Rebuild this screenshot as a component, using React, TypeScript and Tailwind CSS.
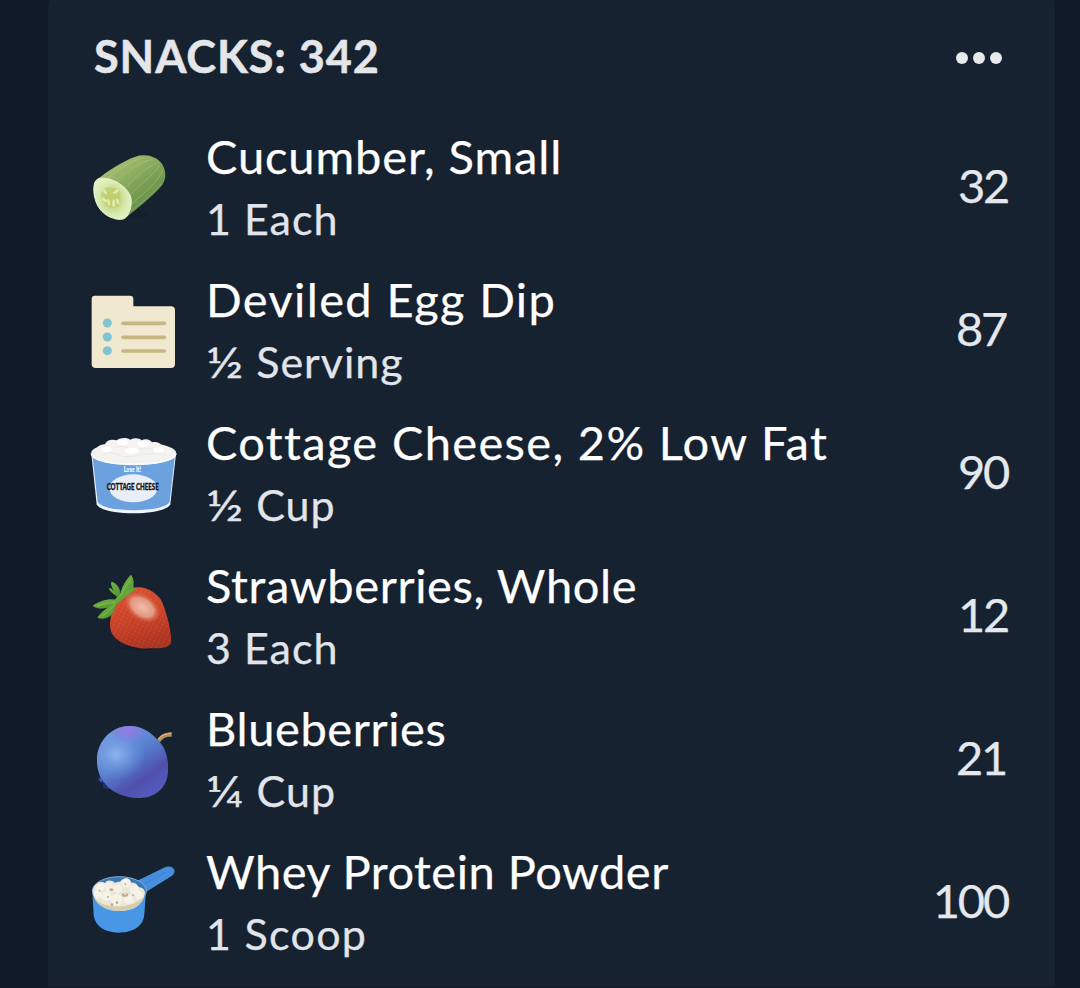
const CucumberIcon = () => (
  <svg viewBox="0 -9 330 303" className="w-[110px] h-[101px] shrink-0">
    <defs>
      <linearGradient id="cucumberSkin" x1="0.2" y1="0.1" x2="0.75" y2="0.8">
        <stop offset="0" stopColor="#a9c27a" />
        <stop offset="0.35" stopColor="#90b062" />
        <stop offset="0.6" stopColor="#7ca154" />
        <stop offset="1" stopColor="#658f4a" />
      </linearGradient>
      <radialGradient id="cucumberFlesh">
        <stop offset="0" stopColor="#c3d376" />
        <stop offset="0.45" stopColor="#c9da8b" />
        <stop offset="0.75" stopColor="#d8eab0" />
        <stop offset="1" stopColor="#e0f1c0" />
      </radialGradient>
    </defs>
    <ellipse cx="160" cy="222" rx="48" ry="13" fill="#101a26" opacity="0.35" />
    <path d="M50 119 C80 95 130 62 166 50 C197 40 232 49 248 75 C260 96 258 120 245 137 C217 168 178 202 128 239Z" fill="url(#cucumberSkin)" />
    <g fill="none" stroke="#c1d58e" strokeWidth="2.5" opacity="0.45" strokeLinecap="round">
      <path d="M86 112 C120 85 158 60 190 53" />
      <path d="M112 118 C150 88 190 58 218 60" strokeDasharray="12 4" />
      <path d="M139 140 C170 108 205 76 235 69" />
      <path d="M150 165 C185 128 221 104 239 77" strokeDasharray="18 3" />
      <path d="M155 192 C190 160 228 135 248 91" />
      <path d="M154 212 C190 184 222 158 247 128" strokeDasharray="9 5" />
    </g>
    <path d="M43 132 C47 114 65 111 87 117 C116 125 143 146 152 170 C157 190 151 217 139 231 C130 240 113 240 98 234 C75 227 54 208 46 179 C41 163 40 144 43 132Z" fill="url(#cucumberFlesh)" stroke="#e7f4ce" strokeWidth="3" />
    <path d="M65 157 C70 140 88 137 99 145 C116 141 125 156 119 172 C124 188 118 204 105 202 C90 208 73 196 70 180 C62 175 61 166 65 157Z" fill="#bccb62" opacity="0.55" />
    <g fill="#e4ecb3">
      <ellipse cx="75" cy="155" rx="4" ry="9" transform="rotate(-35 75 155)" />
      <ellipse cx="108" cy="155" rx="4" ry="10" transform="rotate(55 108 155)" />
      <ellipse cx="73" cy="179" rx="4" ry="10" transform="rotate(-48 73 179)" />
      <ellipse cx="86" cy="187" rx="4" ry="10" transform="rotate(-10 86 187)" />
      <ellipse cx="101" cy="190" rx="4" ry="12" />
      <ellipse cx="113" cy="184" rx="4" ry="10" transform="rotate(-20 113 184)" />
    </g>
  </svg>
);

const RecipeIcon = () => (
  <svg viewBox="0 0 330 303" className="w-[110px] h-[101px] shrink-0">
    <path d="M45 47 H150 Q160 47 160 57 V79 H273 Q285 79 285 91 V252 Q285 264 273 264 H47 Q35 264 35 252 V57 Q35 47 45 47Z" fill="#f1e9cf" />
    {[129, 171, 212].map((y) => (
      <g key={y}>
        <circle cx="82" cy={y} r="13.5" fill="#7fc3d4" />
        <path d={`M129 ${y + 1} H253`} stroke="#c6b67f" strokeWidth="11" strokeLinecap="round" />
      </g>
    ))}
  </svg>
);

const CottageCheeseIcon = () => (
  <svg viewBox="0 -6 330 303" className="w-[110px] h-[101px] shrink-0">
    <path d="M34 86 L50 238 C65 274 255 274 271 238 L288 86Z" fill="#eef5fd" />
    <path d="M38 98 C90 127 232 127 284 98 L269 230 C255 264 67 264 53 230Z" fill="#6ba1df" />
    <ellipse cx="161" cy="83" rx="127" ry="33" fill="#f1f1ef" />
    <path d="M49 86 C44 67 57 59 75 58 C81 42 101 43 110 46 C122 37 142 38 151 44 C163 38 179 39 184 46 C199 39 212 45 216 52 C233 49 244 57 247 66 C269 64 282 74 277 87 C240 112 86 113 49 86Z" fill="#f4f3f0" />
    <g fill="#fff">
      <ellipse cx="80" cy="73" rx="15" ry="9" />
      <ellipse cx="127" cy="53" rx="17" ry="9" />
      <ellipse cx="190" cy="57" rx="18" ry="10" />
      <ellipse cx="235" cy="75" rx="17" ry="8" />
      <ellipse cx="156" cy="77" rx="22" ry="9" />
    </g>
    <path d="M65 91 Q88 77 109 88 T155 94 T207 86 T257 91 M106 67 Q128 59 145 69 M178 73 Q198 65 219 73" fill="none" stroke="#ddd9d1" strokeWidth="3" opacity="0.5" />
    <path d="M34 85 C42 129 280 129 288 85" fill="none" stroke="#f8fafc" strokeWidth="6" />
    <ellipse cx="160" cy="190" rx="72" ry="42" fill="#e9eef9" />
    <text x="157" y="142" fill="#fff" fontFamily="Lato, sans-serif" fontWeight="900" fontSize="20" textAnchor="middle" textLength="52" lengthAdjust="spacingAndGlyphs">Lose It!</text>
    <text x="158" y="194" fill="#14151c" stroke="#14151c" strokeWidth="1" fontFamily="Lato, sans-serif" fontWeight="900" fontSize="27" textAnchor="middle" textLength="156" lengthAdjust="spacingAndGlyphs">COTTAGE CHEESE</text>
  </svg>
);

const StrawberryIcon = () => (
  <svg viewBox="0 3 330 303" className="w-[110px] h-[101px] shrink-0">
    <defs>
      <linearGradient id="berryBody" x1="0.3" y1="0" x2="0.55" y2="1">
        <stop offset="0" stopColor="#db5236" />
        <stop offset="0.5" stopColor="#cb4429" />
        <stop offset="1" stopColor="#ab3421" />
      </linearGradient>
      <radialGradient id="berryShine">
        <stop offset="0" stopColor="#f0bcab" />
        <stop offset="0.6" stopColor="#e8a692" stopOpacity="0.85" />
        <stop offset="1" stopColor="#d8583b" stopOpacity="0" />
      </radialGradient>
      <pattern id="berrySeeds" width="13" height="11" patternUnits="userSpaceOnUse" patternTransform="rotate(27)">
        <circle cx="3" cy="3" r="1.8" fill="#ee8a59" />
        <circle cx="9" cy="8" r="1.8" fill="#982b1b" />
      </pattern>
      <linearGradient id="berryLeaf" x1="0" y1="0" x2="1" y2="1">
        <stop offset="0" stopColor="#78bc49" />
        <stop offset="1" stopColor="#4c8e2c" />
      </linearGradient>
    </defs>
    <ellipse cx="178" cy="247" rx="70" ry="9" fill="#0f1722" opacity="0.4" />
    <path d="M166 68 C192 61 229 81 243 105 C258 135 277 205 273 232 C271 246 247 251 217 250 C174 253 132 241 109 221 C91 207 87 185 92 160 C96 123 128 77 166 68Z" fill="url(#berryBody)" />
    <path d="M166 68 C192 61 229 81 243 105 C258 135 277 205 273 232 C271 246 247 251 217 250 C174 253 132 241 109 221 C91 207 87 185 92 160 C96 123 128 77 166 68Z" fill="url(#berrySeeds)" opacity="0.4" />
    <ellipse cx="187" cy="127" rx="62" ry="40" transform="rotate(34 187 127)" fill="url(#berryShine)" />
    <g fill="url(#berryLeaf)">
      <path d="M118 101 C121 71 137 44 153 29 C162 40 162 57 160 68 C169 66 172 73 163 76 C147 86 132 91 118 101Z" />
      <path d="M114 98 C105 89 91 83 86 70 C95 68 98 76 103 79 C94 64 91 55 95 50 C112 55 124 73 120 91Z" />
      <path d="M111 105 C89 99 60 107 38 122 C51 135 85 132 105 119Z" />
      <path d="M110 113 C85 124 66 138 52 158 C70 166 91 157 98 145 C104 137 105 124 110 113Z" />
      <path d="M97 115 C111 90 138 76 168 69 C154 87 129 98 107 121Z" />
    </g>
    <path d="M119 94 Q137 67 151 43 M106 112 Q79 115 51 122 M105 117 Q87 143 66 153" fill="none" stroke="#91ce5b" strokeWidth="3" opacity="0.6" />
  </svg>
);

const BlueberryIcon = () => (
  <svg viewBox="0 -3 330 303" className="w-[110px] h-[101px] shrink-0">
    <defs>
      <linearGradient id="blueberrySkin" x1="0.2" y1="0.15" x2="0.7" y2="0.9">
        <stop offset="0" stopColor="#6f96df" />
        <stop offset="0.45" stopColor="#577fce" />
        <stop offset="0.8" stopColor="#504fac" />
        <stop offset="1" stopColor="#5259ba" />
      </linearGradient>
      <radialGradient id="blueberryShine">
        <stop offset="0" stopColor="#8cb5ee" />
        <stop offset="1" stopColor="#6794de" stopOpacity="0" />
      </radialGradient>
      <radialGradient id="blueberryViolet">
        <stop offset="0" stopColor="#9d77e5" />
        <stop offset="1" stopColor="#8576dd" stopOpacity="0" />
      </radialGradient>
      <clipPath id="blueberryShape">
        <path d="M145 48 C185 46 215 68 237 94 C258 116 267 151 264 185 C262 231 230 259 188 263 C143 267 101 252 76 222 C59 203 50 177 51 150 C51 94 93 50 145 48Z" />
      </clipPath>
    </defs>
    <path d="M232 89 C241 73 257 67 275 67 V80 C259 79 248 84 240 97Z" fill="#b38e5c" />
    <path d="M235 88 C245 74 258 70 274 70" fill="none" stroke="#d4b17d" strokeWidth="4" />
    <path d="M58 177 C62 194 52 203 55 214 L68 219 L70 234 L87 237 L92 220Z" fill="#252d79" />
    <path d="M56 207 L68 201 L65 218Z" fill="#4854a9" />
    <g clipPath="url(#blueberryShape)">
      <path d="M45 40 H270 V270 H45Z" fill="url(#blueberrySkin)" />
      <ellipse cx="109" cy="133" rx="87" ry="79" fill="url(#blueberryShine)" />
      <ellipse cx="145" cy="62" rx="54" ry="40" fill="url(#blueberryViolet)" />
    </g>
  </svg>
);

const ScoopIcon = () => (
  <svg viewBox="0 -9 330 303" className="w-[110px] h-[101px] shrink-0">
    <path d="M164 81 L252 38 C266 30 281 36 283 46 C285 55 279 62 270 66 L194 113Z" fill="#468fdf" />
    <path d="M193 86 L257 52" stroke="#3979c4" strokeWidth="3" opacity="0.7" />
    <path d="M37 107 L41 181 C45 213 74 233 115 233 C163 233 191 211 193 177 L198 108Z" fill="#4896e6" />
    <ellipse cx="118" cy="108" rx="81" ry="43" fill="#3978b3" stroke="#7facd6" strokeWidth="3" />
    <path d="M39 111 C37 102 42 90 51 86 C59 78 72 82 76 84 C80 71 101 77 105 84 C111 79 121 81 123 77 C133 65 151 73 151 83 C164 82 173 87 175 97 C190 96 198 109 194 118 C190 151 158 168 121 168 C74 168 43 145 39 111Z" fill="#ebe7d8" />
    <path d="M43 128 C68 160 154 168 193 124 C183 156 148 170 117 168 C80 168 51 150 43 128Z" fill="#d3ccae" />
    <g fill="#f5f2e8">
      <circle cx="61" cy="96" r="13" />
      <circle cx="87" cy="96" r="13" />
      <circle cx="139" cy="84" r="14" />
      <circle cx="113" cy="101" r="13" />
      <circle cx="164" cy="104" r="14" />
      <circle cx="79" cy="124" r="15" />
      <circle cx="110" cy="134" r="17" />
      <circle cx="146" cy="132" r="15" />
      <circle cx="53" cy="118" r="12" />
      <circle cx="177" cy="120" r="12" />
    </g>
    <g fill="#bcae8d">
      <ellipse cx="94" cy="104" rx="6" ry="4" />
      <ellipse cx="135" cy="119" rx="10" ry="6" />
      <circle cx="84" cy="126" r="3" />
      <circle cx="111" cy="143" r="4" />
      <circle cx="136" cy="88" r="3" />
      <circle cx="59" cy="107" r="3" />
      <circle cx="159" cy="121" r="3" />
      <circle cx="96" cy="149" r="4" />
    </g>
    <ellipse cx="135" cy="117" rx="5" ry="3" fill="#e5dcbb" />
  </svg>
);

const snacks = [
  { name: "Cucumber, Small", amount: "1", unit: "Each", calories: 32, icon: CucumberIcon, nameClass: "tracking-[0.9px]", servingClass: "tracking-[1px]", amountClass: "", caloriesClass: "mr-0" },
  { name: "Deviled Egg Dip", amount: "½", unit: "Serving", calories: 87, icon: RecipeIcon, nameClass: "tracking-[1.37px]", servingClass: "tracking-[1px]", amountClass: "inline-block origin-left scale-x-[1.19] mr-[6px]", caloriesClass: "mr-[2px]" },
  { name: "Cottage Cheese, 2% Low Fat", amount: "½", unit: "Cup", calories: 90, icon: CottageCheeseIcon, nameClass: "tracking-[1.35px]", servingClass: "tracking-[1px]", amountClass: "inline-block origin-left scale-x-[1.19] mr-[6px]", caloriesClass: "mr-0" },
  { name: "Strawberries, Whole", amount: "3", unit: "Each", calories: 12, icon: StrawberryIcon, nameClass: "tracking-[0.63px]", servingClass: "tracking-[1px]", amountClass: "", caloriesClass: "mr-0" },
  { name: "Blueberries", amount: "¼", unit: "Cup", calories: 21, icon: BlueberryIcon, nameClass: "tracking-[0.6px]", servingClass: "tracking-[1px]", amountClass: "inline-block origin-left scale-x-[1.19] mr-[6px]", caloriesClass: "mr-[2px]" },
  { name: "Whey Protein Powder", amount: "1", unit: "Scoop", calories: 100, icon: ScoopIcon, nameClass: "tracking-[0.5px]", servingClass: "tracking-[1.3px]", amountClass: "", caloriesClass: "mr-0" },
];

const App = () => {
  return (
    <div className="flex h-[988px] flex-col overflow-hidden bg-[#111a28] pl-12 pr-[25px] font-['Lato',sans-serif]">
      <div className="-mt-3 h-[999px] shrink-0 rounded-t-[20px] bg-[#172231] pt-3">

        {/* Header */}
        <div className="flex h-[115px] items-start justify-between pl-[46px] pr-[53px]">
          <h2 className="mt-[26px] text-[45px] leading-[60px] font-bold tracking-[0.9px] text-[#e4e6e9] whitespace-nowrap [-webkit-text-stroke:0.5px]">SNACKS: 342</h2>
          <button className="mt-[52px] flex gap-[5px]" aria-label="More options">
            <span className="size-3 rounded-full bg-[#e7e9eb]" />
            <span className="size-3 rounded-full bg-[#e7e9eb]" />
            <span className="size-3 rounded-full bg-[#e7e9eb]" />
          </button>
        </div>

        {/* Snack list */}
        {snacks.map(({ name, amount, unit, calories, icon: Icon, nameClass, servingClass, amountClass, caloriesClass }) => (
          <div key={name} className="flex h-[143px] items-center pl-8 pr-[47px]">
            <div className="mt-[2px]">
              <Icon />
            </div>
            <div className="ml-4 flex-1 whitespace-nowrap [-webkit-text-stroke:0.25px]">
              <p className={`h-[62px] text-[47px] leading-[62px] text-white ${nameClass}`}>{name}</p>
              <p className={`h-[62px] text-[43px] leading-[63px] text-[#e1e5eb] ${servingClass}`}>
                <span className={amountClass}>{amount}</span> {unit}
              </p>
            </div>
            <p className={`mb-[4px] text-[47px] leading-[62px] tracking-[-2.2px] text-[#e4e8ed] [-webkit-text-stroke:0.25px] ${caloriesClass}`}>{calories}</p>
          </div>
        ))}
      </div>
    </div>
  );
};

export default App;
